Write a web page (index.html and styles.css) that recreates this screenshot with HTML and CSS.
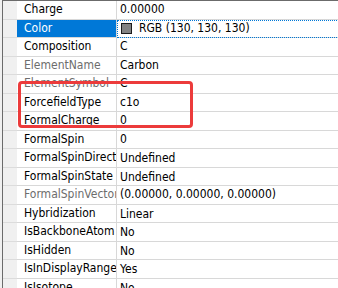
FILE: index.html
```html
<!DOCTYPE html>
<html lang="en">
<head>
  <meta charset="UTF-8">
  <title>Atom properties</title>
  <link rel="stylesheet" href="styles.css">
</head>
<body>
<div class="grid">
  <div class="row"><span class="gutter"></span><span class="name">Charge</span><span class="value">0.00000</span></div>
  <div class="row selected"><span class="gutter"></span><span class="name">Color</span><span class="value focus"><span class="swatch"></span>RGB (130, 130, 130)</span></div>
  <div class="row"><span class="gutter"></span><span class="name">Composition</span><span class="value">C</span></div>
  <div class="row"><span class="gutter"></span><span class="name readonly">ElementName</span><span class="value">Carbon</span></div>
  <div class="row"><span class="gutter"></span><span class="name readonly">ElementSymbol</span><span class="value">C</span></div>
  <div class="row"><span class="gutter"></span><span class="name">ForcefieldType</span><span class="value">c1o</span></div>
  <div class="row"><span class="gutter"></span><span class="name">FormalCharge</span><span class="value">0</span></div>
  <div class="row"><span class="gutter"></span><span class="name">FormalSpin</span><span class="value">0</span></div>
  <div class="row"><span class="gutter"></span><span class="name">FormalSpinDirection</span><span class="value drop">Undefined</span></div>
  <div class="row"><span class="gutter"></span><span class="name">FormalSpinState</span><span class="value drop">Undefined</span></div>
  <div class="row"><span class="gutter"></span><span class="name readonly">FormalSpinVector</span><span class="value">(0.00000, 0.00000, 0.00000)</span></div>
  <div class="row"><span class="gutter"></span><span class="name">Hybridization</span><span class="value drop">Linear</span></div>
  <div class="row"><span class="gutter"></span><span class="name">IsBackboneAtom</span><span class="value drop">No</span></div>
  <div class="row"><span class="gutter"></span><span class="name">IsHidden</span><span class="value drop">No</span></div>
  <div class="row"><span class="gutter"></span><span class="name">IsInDisplayRange</span><span class="value drop">Yes</span></div>
  <div class="row"><span class="gutter"></span><span class="name">IsIsotope</span><span class="value drop">No</span></div>
</div>

<!-- red annotation box drawn over the grid -->
<div class="mark"></div>
</body>
</html>
```

FILE: styles.css
```css
body {
  margin: 0;
  padding: 0;
  overflow: hidden;
  background-color: #f0f0f0;
  font-family: "DejaVu Sans Condensed", "DejaVu Sans", sans-serif;
  font-stretch: condensed;
  font-size: 12px;
  color: #000;
}

.grid {
  width: 360px;
  margin-left: 2px;
  background-color: #fff;
  border-left: 1px solid #6b6b6b;
  border-top: 1px solid #6b6b6b;
}

.row {
  display: grid;
  grid-template-columns: 14px 100px 1fr;
  height: 18.5px;
}

.gutter {
  background-color: #f0f0f0;
  border-bottom: 1px solid #dcdcdc;
}

.name,
.value {
  line-height: 17.5px;
  white-space: nowrap;
  overflow: hidden;
  border-bottom: 1px solid #d8d8d8;
}

.name {
  padding-left: 7px;
  border-right: 1px solid #d8d8d8;
}

.name.readonly {
  color: #6d6d6d;
}

.value {
  padding-left: 3px;
}

.value.drop {
  padding-top: 1px;
}

.selected .name {
  background-color: #0078d7;
  color: #fff;
}

.value.focus {
  outline: 1px dotted #0078d7;
  outline-offset: -1px;
  display: flex;
  align-items: center;
}

.swatch {
  width: 9px;
  height: 9px;
  margin: 0 7px 0 1px;
  background-color: rgb(130, 130, 130);
  border: 1px solid #1a1a1a;
}

.mark {
  position: absolute;
  left: 18px;
  top: 81px;
  width: 169px;
  height: 41px;
  border: 3px solid #ec3b3b;
  border-radius: 4px;
}
```
